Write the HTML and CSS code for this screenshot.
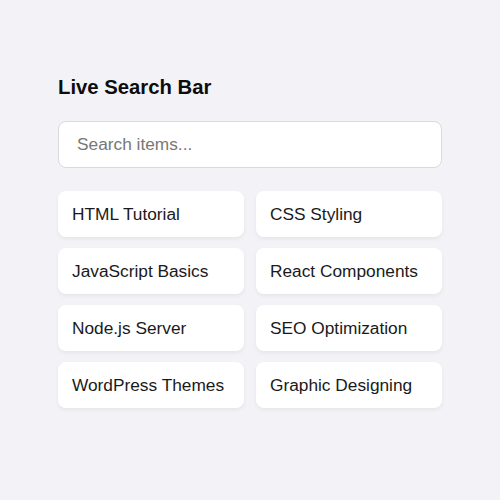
FILE: index.html
```html
<!DOCTYPE html>
<html lang="en">
<head>
<meta charset="utf-8">
<title>Live Search Bar</title>
<link rel="stylesheet" href="styles.css">
</head>
<body>
<main class="wrap">
  <h2 class="title">Live Search Bar</h2>
  <input class="search" type="text" placeholder="Search items..." autofocus>
  <ul class="list">
    <li class="item">HTML Tutorial</li>
    <li class="item">CSS Styling</li>
    <li class="item">JavaScript Basics</li>
    <li class="item">React Components</li>
    <li class="item">Node.js Server</li>
    <li class="item">SEO Optimization</li>
    <li class="item">WordPress Themes</li>
    <li class="item">Graphic Designing</li>
  </ul>
</main>
</body>
</html>
```
FILE: styles.css
```css
* { box-sizing: border-box; }
html, body { margin: 0; padding: 0; }
body {
  background: #f3f3f7;
  font-family: "Liberation Sans", Arial, sans-serif;
  color: #1a1a1a;
  width: 500px;
  height: 500px;
}
.wrap {
  width: 384px;
  margin: 0 auto;
  padding-top: 76px;
  display: flex;
  flex-direction: column;
}
.title {
  margin: 0 0 22px;
  font-size: 20.3px;
  line-height: 23px;
  font-weight: bold;
  color: #0d0d0d;
}
.search {
  width: 100%;
  height: 47px;
  padding: 0 18px;
  border: 1px solid #d9d9de;
  border-radius: 8px;
  background: #fff;
  font-family: inherit;
  font-size: 17.3px;
  color: #222;
  outline: none;
  margin: 0 0 23px;
}
.search::placeholder { color: #777; }
.list {
  list-style: none;
  margin: 0;
  padding: 0;
  display: grid;
  grid-template-columns: 1fr 1fr;
  column-gap: 12px;
  row-gap: 11px;
}
.item {
  background: #fff;
  border-radius: 8px;
  padding: 13px 14px;
  font-size: 17.3px;
  line-height: 20px;
  color: #1a1a1a;
  box-shadow: 0 2px 4px rgba(0, 0, 0, 0.06);
}
```
